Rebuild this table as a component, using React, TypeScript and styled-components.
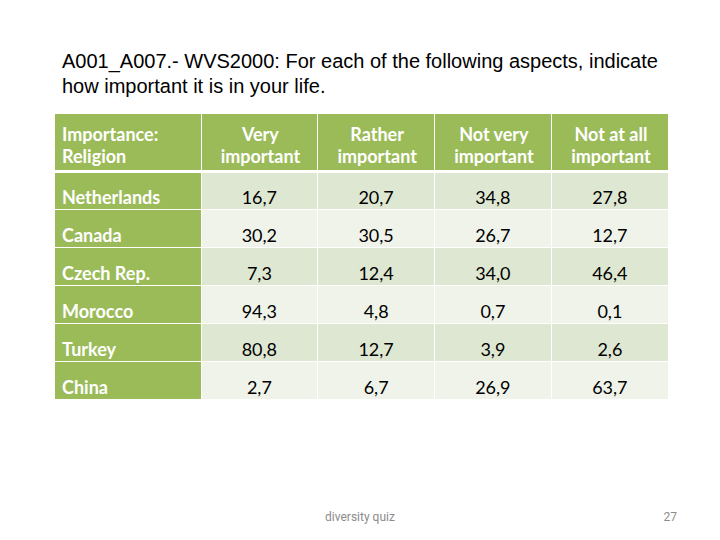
import React from 'react'
import styled, { createGlobalStyle } from 'styled-components'

const GlobalStyle = createGlobalStyle`
  html, body {
    margin: 0;
    padding: 0;
    background: #ffffff;
  }
`

const Slide = styled.div`
  width: 720px;
  height: 540px;
  display: flex;
  flex-direction: column;
  box-sizing: border-box;
  padding-top: 49px;
  background: #ffffff;
`

const Title = styled.h1`
  margin: 0 0 0 62px;
  width: 620px;
  font-family: 'Liberation Sans', Arial, sans-serif;
  font-weight: normal;
  font-size: 20px;
  line-height: 25px;
  color: #000000;
`

const Table = styled.table`
  margin: 15px 0 0 55px;
  width: 613px;
  border-collapse: collapse;
  table-layout: fixed;
  font-family: Lato, 'Open Sans', sans-serif;
  font-size: 18px;
`

const HeadCol = styled.th<{ $first?: boolean }>`
  background-color: #9bbb59;
  color: #ffffff;
  font-weight: bold;
  text-align: ${(p) => (p.$first ? 'left' : 'center')};
  vertical-align: bottom;
  height: 57px;
  padding: 0 5px 3px 7px;
  line-height: 22px;
  box-sizing: border-box;
  border-left: 1px solid #ffffff;
  border-bottom: 3px solid #ffffff;
  &:first-child {
    border-left: none;
  }
`

const Row = styled.tr<{ $odd: boolean }>`
  background-color: ${(p) => (p.$odd ? '#dee7d1' : '#eff3ea')};
`

const NameCol = styled.td`
  background-color: #9bbb59;
  color: #ffffff;
  font-weight: bold;
  text-align: left;
  vertical-align: bottom;
  height: 38px;
  padding: 0 5px 1px 7px;
  line-height: 22px;
  box-sizing: border-box;
  border-bottom: 1px solid #ffffff;
`

const Col = styled.td`
  color: #000000;
  text-align: center;
  vertical-align: bottom;
  height: 38px;
  padding: 0 6px 1px 6px;
  line-height: 22px;
  box-sizing: border-box;
  border-left: 1px solid #ffffff;
  border-bottom: 1px solid #ffffff;
`

const Footer = styled.div`
  margin-top: auto;
  height: 30px;
  display: grid;
  grid-template-columns: 1fr auto 1fr;
  align-items: start;
  font-family: Roboto, 'Liberation Sans', sans-serif;
  font-size: 12px;
  line-height: 14px;
  color: #8b8b8b;
`

const FooterText = styled.span`
  grid-column: 2;
`

const PageNumber = styled.span`
  grid-column: 3;
  justify-self: end;
  padding-right: 43px;
`

const headers = [
  ['Very', 'important'],
  ['Rather', 'important'],
  ['Not very', 'important'],
  ['Not at all', 'important'],
]

const rows: { name: string; values: string[] }[] = [
  { name: 'Netherlands', values: ['16,7', '20,7', '34,8', '27,8'] },
  { name: 'Canada', values: ['30,2', '30,5', '26,7', '12,7'] },
  { name: 'Czech Rep.', values: ['7,3', '12,4', '34,0', '46,4'] },
  { name: 'Morocco', values: ['94,3', '4,8', '0,7', '0,1'] },
  { name: 'Turkey', values: ['80,8', '12,7', '3,9', '2,6'] },
  { name: 'China', values: ['2,7', '6,7', '26,9', '63,7'] },
]

export default function App() {
  return (
    <>
      <GlobalStyle />
      <Slide>
        <Title>
          A001_A007.- WVS2000: For each of the following aspects, indicate how important it is in your life.
        </Title>
        <Table>
          <colgroup>
            <col style={{ width: 146 }} />
            <col />
            <col />
            <col />
            <col />
          </colgroup>
          <thead>
            <tr>
              <HeadCol $first>
                Importance:
                <br />
                Religion
              </HeadCol>
              {headers.map((h) => (
                <HeadCol key={h.join(' ')}>
                  {h[0]}
                  <br />
                  {h[1]}
                </HeadCol>
              ))}
            </tr>
          </thead>
          <tbody>
            {rows.map((r, i) => (
              <Row key={r.name} $odd={i % 2 === 0}>
                <NameCol>{r.name}</NameCol>
                {r.values.map((v, j) => (
                  <Col key={j}>{v}</Col>
                ))}
              </Row>
            ))}
          </tbody>
        </Table>
        <Footer>
          <FooterText>diversity quiz</FooterText>
          <PageNumber>27</PageNumber>
        </Footer>
      </Slide>
    </>
  )
}
